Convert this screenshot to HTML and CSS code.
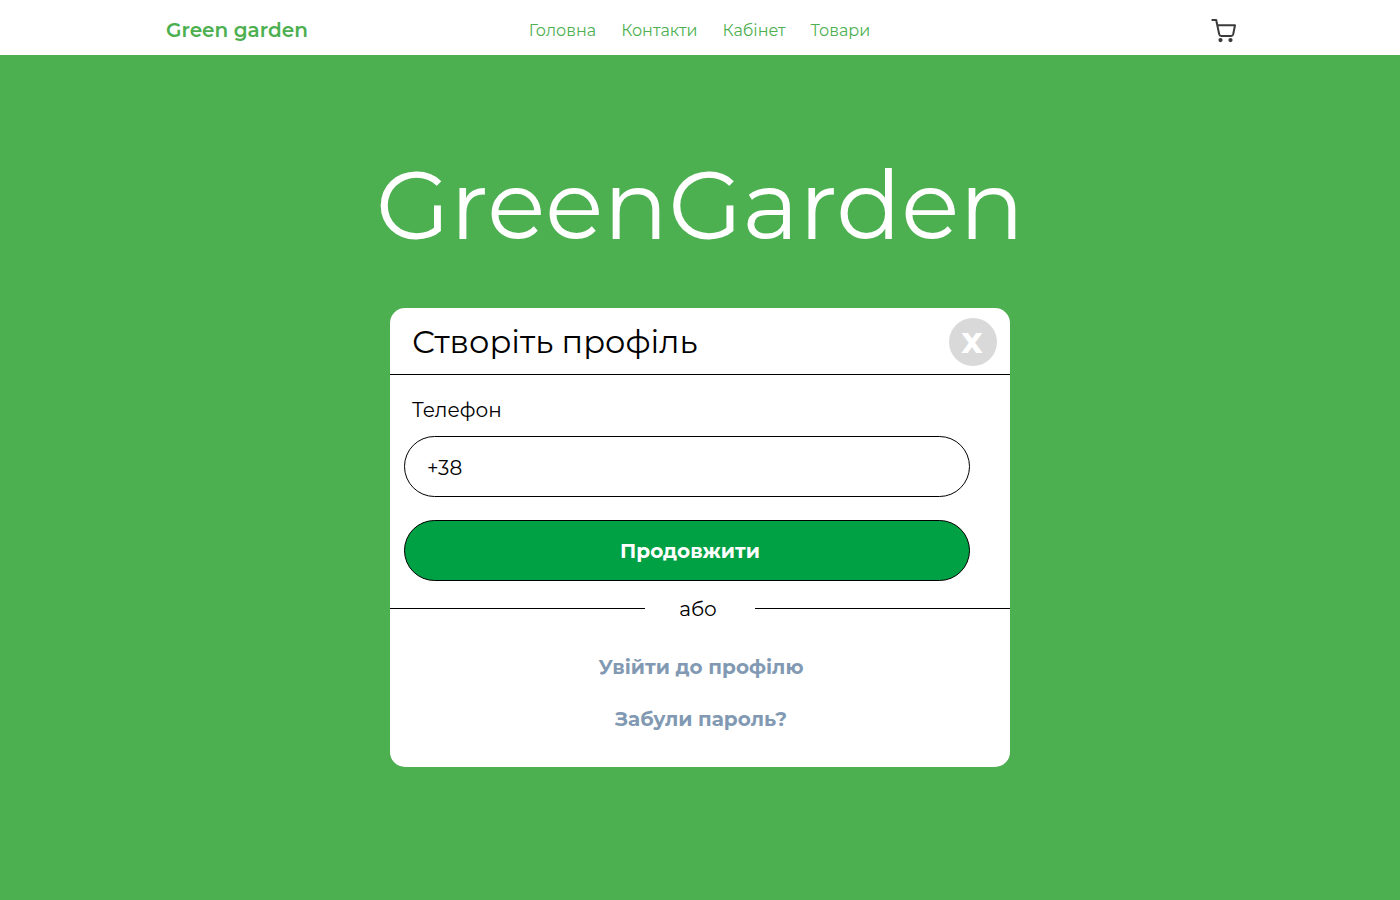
FILE: index.html
```html
<!DOCTYPE html>
<html lang="uk">
<head>
  <meta charset="utf-8">
  <meta name="viewport" content="width=device-width, initial-scale=1">
  <title>Green garden</title>
  <link rel="stylesheet" href="styles.css">
</head>
<body>
  <header class="site-header">
    <div class="site-header-inner">
      <a class="brand" href="#">Green garden</a>
      <nav class="nav">
        <a class="nav-link" href="#">Головна</a>
        <a class="nav-link" href="#">Контакти</a>
        <a class="nav-link" href="#">Кабінет</a>
        <a class="nav-link" href="#">Товари</a>
      </nav>
      <a class="cart" href="#" aria-label="Кошик">
        <svg class="cart-icon" viewBox="0 0 26 26" aria-hidden="true">
          <path d="M.6 2H5.2L8.2 16.3Q8.6 18 10.2 18H20.2Q21.8 18 22.2 16.3L24 7.3H6.6" fill="none" stroke="#3b3b3b" stroke-width="2" stroke-linejoin="round"/>
          <circle cx="9.5" cy="22.1" r="2.1" fill="#3b3b3b"/>
          <circle cx="19.5" cy="22.1" r="2.1" fill="#3b3b3b"/>
        </svg>
      </a>
    </div>
  </header>
  <main class="hero">
    <h1 class="hero-title">GreenGarden</h1>
    <section class="card">
      <div class="card-header">
        <h2 class="card-title">Створіть профіль</h2>
        <button class="close" type="button">x</button>
      </div>
      <form class="form">
        <label class="label" for="phone">Телефон</label>
        <input class="input" id="phone" type="tel" value="+38">
        <button class="submit" type="button">Продовжити</button>
      </form>
      <div class="divider"><span class="divider-text">або</span></div>
      <div class="links">
        <a class="link" href="#">Увійти до профілю</a>
        <a class="link" href="#">Забули пароль?</a>
      </div>
    </section>
  </main>
</body>
</html>
```

FILE: styles.css
```css
* {
  box-sizing: border-box;
}

body {
  margin: 0;
  min-height: 100vh;
  background: #4caf50;
  color: #000;
  font-family: Montserrat, Inter, sans-serif;
  font-size: 20px;
  line-height: 24px;
}

a {
  text-decoration: none;
}

.site-header {
  background: #fff;
}

.site-header-inner {
  display: grid;
  grid-template-columns: 1fr auto 1fr;
  align-items: center;
  max-width: 1110px;
  margin: 0 auto;
  padding: 18px 18px 11px 21px;
}

.brand {
  padding-bottom: 2px;
  color: #4caf50;
  font-weight: 600;
}

.nav {
  display: flex;
  gap: 25px;
  padding-right: 4px;
}

.nav-link {
  color: #4caf50;
  font-size: 16px;
}

.cart {
  display: flex;
  justify-self: end;
}

.cart-icon {
  width: 26px;
  height: 26px;
}

.hero {
  display: flex;
  flex-direction: column;
  align-items: center;
  padding: 88px 20px 48px;
}

.hero-title {
  margin: 0 0 42px;
  color: #fff;
  font-size: 96px;
  font-weight: 400;
  line-height: 123px;
}

.card {
  width: 100%;
  max-width: 620px;
  padding-bottom: 36px;
  border-radius: 15px;
  background: #fff;
}

.card-header {
  display: flex;
  align-items: center;
  justify-content: space-between;
  padding: 10px 13px 8px 22px;
  border-bottom: 1px solid #000;
}

.card-title {
  margin: 0;
  font-size: 32px;
  font-weight: 400;
  line-height: 40px;
}

.close {
  width: 48px;
  height: 48px;
  padding: 0 2px 4px 0;
  border: 0;
  border-radius: 50%;
  background: #d9d9d9;
  color: #fff;
  font: inherit;
  font-size: 36px;
  font-weight: 700;
  line-height: 44px;
}

.form {
  display: flex;
  flex-direction: column;
  padding: 23px 40px 16px 14px;
}

.label {
  padding-left: 8px;
}

.input {
  height: 61px;
  margin: 14px 0 23px;
  padding: 2px 22px 0;
  border: 1px solid #000;
  border-radius: 31px;
  background: #fff;
  color: #000;
  font: inherit;
}

.submit {
  height: 61px;
  padding: 0 0 0 6px;
  border: 1px solid #000;
  border-radius: 31px;
  background: #00a144;
  color: #fff;
  font: inherit;
  font-weight: 700;
}

.divider {
  display: grid;
  grid-template-columns: 1fr 110px 1fr;
  align-items: center;
}

.divider::before,
.divider::after {
  content: "";
  margin-bottom: 1px;
  border-top: 1px solid #000;
}

.divider-text {
  padding-right: 4px;
  text-align: center;
}

.links {
  display: flex;
  flex-direction: column;
  align-items: center;
  gap: 28px;
  padding: 34px 0 0 2px;
}

.link {
  color: #8199b2;
  font-weight: 700;
}
```
